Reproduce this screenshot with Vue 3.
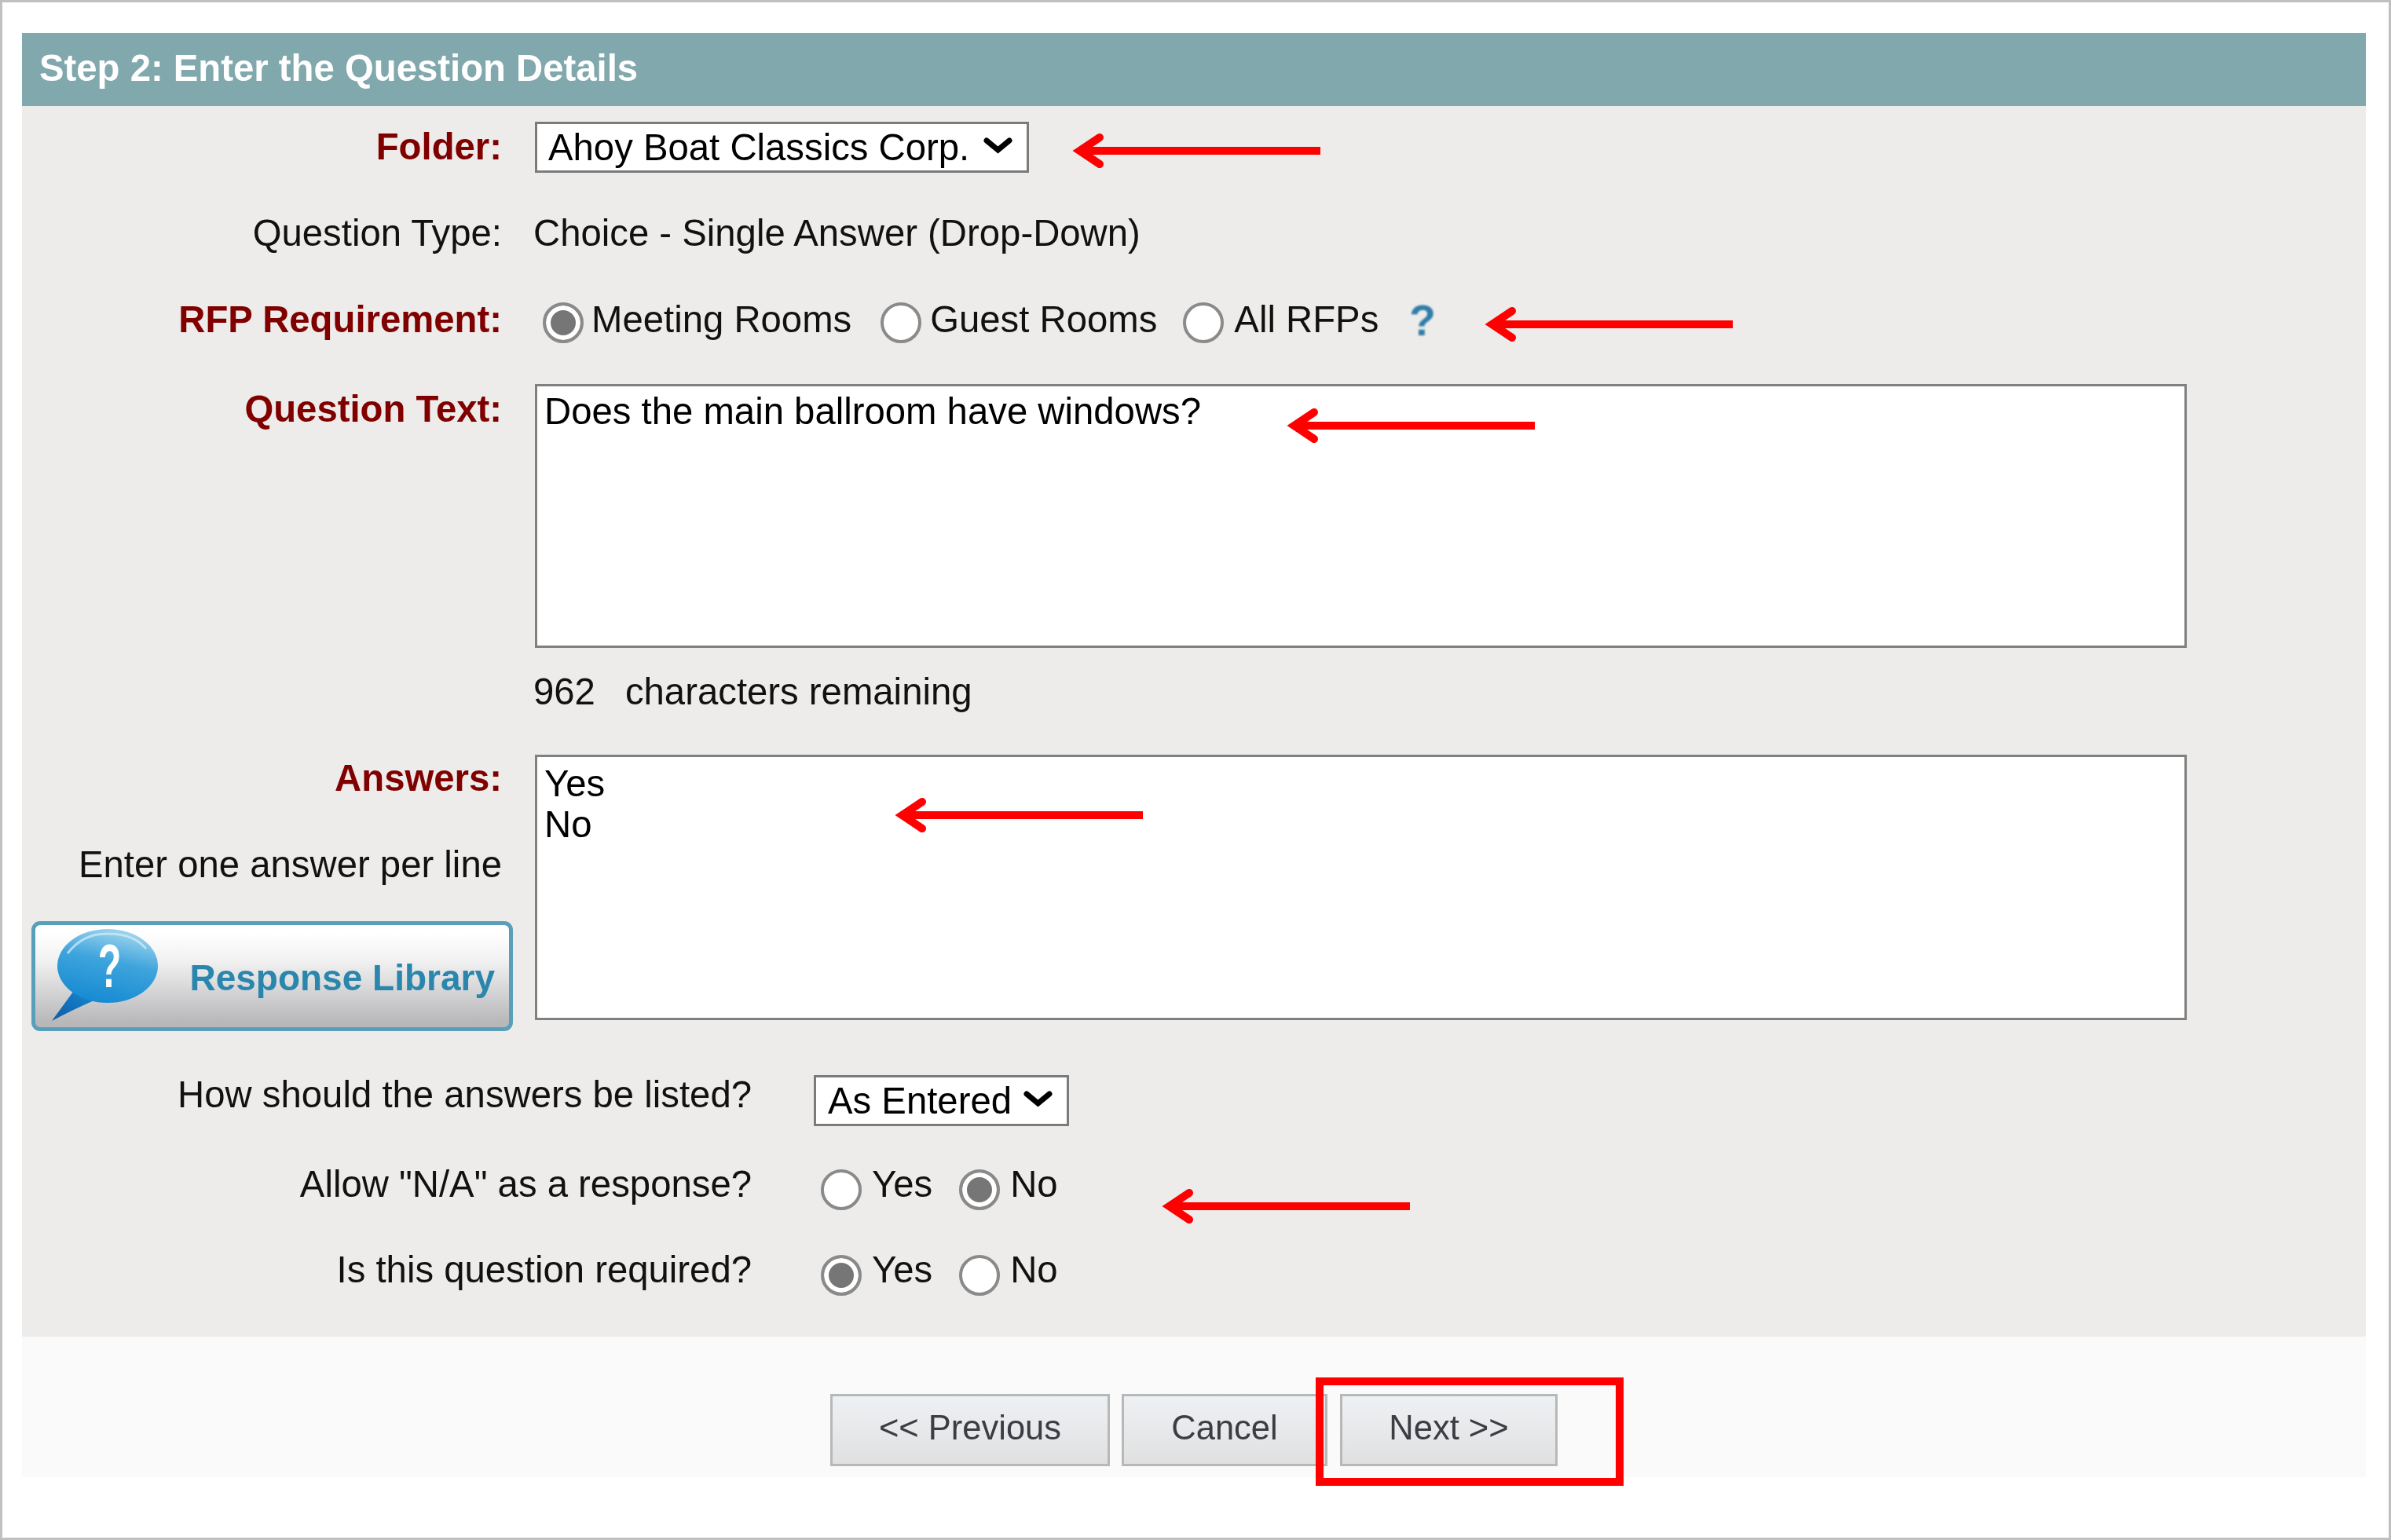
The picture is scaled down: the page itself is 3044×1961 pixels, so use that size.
<script setup>
const arrows = [
  { x: 1365, y: 167 },
  { x: 1890, y: 388 },
  { x: 1638, y: 517 },
  { x: 1139, y: 1013 },
  { x: 1479, y: 1511 },
]
const arrowStyle = (a) => ({ left: a.x + 'px', top: a.y + 'px' })
</script>

<template>
  <div class="frame">
    <div class="panel">
      <h2 class="head">Step 2: Enter the Question Details</h2>
      <div class="body">
        <div class="row r-folder">
          <label class="lab req l-folder">Folder:</label>
          <div class="sel-wrap w-folder">
            <select class="sel">
              <option>Ahoy Boat Classics Corp.</option>
            </select>
            <svg class="chev" viewBox="0 0 37 21"><path d="M4 4 L18.5 16 L33 4" fill="none" stroke="#000" stroke-width="7" stroke-linecap="round" /></svg>
          </div>
        </div>

        <div class="row r-type">
          <span class="lab">Question Type:</span>
          <span class="val">Choice - Single Answer (Drop-Down)</span>
        </div>

        <div class="row r-rfp">
          <span class="lab req">RFP Requirement:</span>
          <div class="opts o-rfp">
            <label class="opt"><input type="radio" name="rfp" checked /><span>Meeting Rooms</span></label>
            <label class="opt"><input type="radio" name="rfp" /><span>Guest Rooms</span></label>
            <label class="opt"><input type="radio" name="rfp" /><span>All RFPs</span></label>
            <span class="help">?</span>
          </div>
        </div>

        <div class="row r-qt">
          <label class="lab req l-qt">Question Text:</label>
          <textarea class="ta ta-q" readonly>Does the main ballroom have windows?</textarea>
        </div>

        <div class="row r-count">
          <span class="count"><span>962</span><span>characters remaining</span></span>
        </div>

        <div class="row r-ans">
          <div class="ans-side">
            <label class="lab req l-ans">Answers:</label>
            <span class="lab l-enter">Enter one answer per line</span>
            <button class="lib" type="button">
              <svg class="bubble" viewBox="0 0 140 124">
                <defs>
                  <linearGradient id="bub" x1="0.7" y1="0" x2="0.4" y2="1">
                    <stop offset="0" stop-color="#a5d8ef" />
                    <stop offset="0.45" stop-color="#3ea4dc" />
                    <stop offset="1" stop-color="#168ad2" />
                  </linearGradient>
                  <linearGradient id="tail" x1="0" y1="1" x2="1" y2="0">
                    <stop offset="0" stop-color="#0e5aa4" />
                    <stop offset="1" stop-color="#168ad2" />
                  </linearGradient>
                </defs>
                <path d="M4 122 L31 85 L60 95 Q30 108 4 122 Z" fill="url(#tail)" />
                <ellipse cx="75" cy="52" rx="64" ry="47" fill="url(#bub)" />
                <path d="M24 36 Q44 10 76 11 Q108 11 124 30" fill="none" stroke="#d6eef8" stroke-width="3" opacity="0.7" />
                <text class="qmark" transform="translate(77.5 79) scale(.62 1)">?</text>
              </svg>
              <span>Response Library</span>
            </button>
          </div>
          <textarea class="ta ta-a" readonly>Yes
No</textarea>
        </div>

        <div class="row r-list">
          <span class="lab2 l-list">How should the answers be listed?</span>
          <div class="sel-wrap w-list">
            <select class="sel s-list">
              <option>As Entered</option>
            </select>
            <svg class="chev" viewBox="0 0 37 21"><path d="M4 4 L18.5 16 L33 4" fill="none" stroke="#000" stroke-width="7" stroke-linecap="round" /></svg>
          </div>
        </div>

        <div class="row r-na">
          <span class="lab2">Allow "N/A" as a response?</span>
          <div class="opts o-low">
            <label class="opt"><input type="radio" name="na" /><span>Yes</span></label>
            <label class="opt"><input type="radio" name="na" checked /><span>No</span></label>
          </div>
        </div>

        <div class="row r-reqd">
          <span class="lab2">Is this question required?</span>
          <div class="opts o-low">
            <label class="opt"><input type="radio" name="rq" checked /><span>Yes</span></label>
            <label class="opt"><input type="radio" name="rq" /><span>No</span></label>
          </div>
        </div>
      </div>

      <div class="foot">
        <button class="btn b-prev" type="button">&lt;&lt; Previous</button>
        <button class="btn b-cancel" type="button">Cancel</button>
        <button class="btn b-next" type="button">Next &gt;&gt;</button>
      </div>
    </div>

    <svg v-for="(a, i) in arrows" :key="i" class="arrow" :style="arrowStyle(a)" viewBox="0 0 316 50">
      <path d="M10 25 H316" stroke="#f00" stroke-width="10" fill="none" />
      <path d="M35 8 L9.5 25 L35 42" stroke="#f00" stroke-width="10" fill="none" stroke-linecap="round" stroke-linejoin="miter" />
    </svg>
    <div class="callout"></div>
  </div>
</template>

<style scoped>
.frame {
  position: relative;
  box-sizing: border-box;
  width: 3044px;
  height: 1961px;
  border: 3px solid #c0c0c0;
  background: #fff;
  padding: 39px 29px 0 25px;
  font-family: "Liberation Sans", Arial, sans-serif;
  font-size: 47.3px;
  line-height: 54px;
  color: #111;
}
.panel { display: flex; flex-direction: column; filter: blur(0.6px); }
.head {
  margin: 0;
  height: 93px;
  padding-left: 22px;
  background: #80a8ad;
  color: #fff;
  font-size: 47.3px;
  font-weight: bold;
  line-height: 90px;
}
.body {
  background: #edecea;
  padding: 20px 0 52px;
  display: flex;
  flex-direction: column;
}
.row { display: flex; align-items: flex-start; }
.r-type { margin-top: 50px; }
.r-rfp { margin-top: 56px; }
.r-qt { margin-top: 52px; }
.r-count { margin-top: 29px; padding-left: 651px; }
.r-ans { margin-top: 53px; }
.r-list { margin-top: 56px; }
.r-na { margin-top: 47px; }
.r-reqd { margin-top: 49px; }

.lab {
  width: 611px;
  margin-right: 42px;
  text-align: right;
  flex: none;
}
.req { color: #800000; font-weight: bold; }
.l-folder { margin-top: 5px; }
.l-qt { margin-top: 5px; }
.lab2 {
  width: 929px;
  margin-right: 79px;
  text-align: right;
  flex: none;
}
.l-list { margin-top: -2px; }

.sel-wrap { position: relative; flex: none; }
.w-folder { width: 629px; height: 65px; }
.w-list { width: 325px; height: 65px; }
.sel {
  appearance: none;
  box-sizing: border-box;
  width: 100%;
  height: 100%;
  margin: 0;
  padding: 0 0 0 14px;
  border: 3px solid #7b7b7b;
  border-radius: 0;
  background: #fff;
  color: #000;
  font: inherit;
  line-height: 54px;
}
.s-list { padding-left: 15px; }
.chev {
  position: absolute;
  right: 21px;
  top: 20px;
  width: 37px;
  height: 21px;
  pointer-events: none;
}

.opts { display: flex; align-items: flex-start; }
.opt { display: flex; align-items: flex-start; }
.opt input {
  appearance: none;
  box-sizing: border-box;
  width: 52px;
  height: 52px;
  margin: 5px 10px 0 0;
  border: 4px solid #8a8a8a;
  border-radius: 50%;
  background: #fff;
  flex: none;
}
.opt input:checked {
  background: #767676;
  box-shadow: inset 0 0 0 6px #fff;
}
.o-rfp { padding-left: 10px; }
.o-rfp .opt { margin-right: 37px; }
.o-rfp .opt:nth-child(2) { margin-right: 33px; }
.o-rfp .opt:nth-child(2) input { margin-right: 11px; }
.o-rfp .opt:nth-child(3) { margin-right: 39px; }
.o-rfp .opt:nth-child(3) input { margin-right: 13px; }
.help {
  width: 32px;
  font-weight: bold;
  color: #2f7da8;
  text-align: center;
  line-height: 54px;
  font-size: 55px;
  margin-top: 1px;
  filter: blur(0.8px);
}
.o-low { padding-left: 9px; }
.o-low .opt input { margin-top: 8px; margin-right: 13px; }
.o-low .opt { margin-right: 34px; }
.val { color: #111; margin-left: -2px; }

.ta {
  box-sizing: border-box;
  display: block;
  width: 2103px;
  margin: 0;
  padding: 8px 9px;
  border: 3px solid #808080;
  border-radius: 0;
  background: #fff;
  color: #000;
  font: inherit;
  line-height: 52px;
  resize: none;
  outline: none;
  overflow: hidden;
}
.ta-q { height: 336px; padding-top: 6px; }
.ta-a { height: 338px; }
.count { display: flex; gap: 38px; }
.ans-side {
  display: flex;
  flex-direction: column;
  align-items: flex-end;
  width: 625px;
  margin-right: 28px;
  flex: none;
}
.ans-side .lab { margin-right: 14px; width: auto; }
.l-ans { margin-top: 3px; }
.l-enter { margin-top: 56px; }
.lib {
  box-sizing: border-box;
  position: relative;
  display: flex;
  align-items: center;
  justify-content: flex-end;
  width: 613px;
  height: 140px;
  margin: 45px 0 0;
  padding: 0 18px 0 0;
  border: 5px solid #5a9fba;
  border-radius: 11px;
  background: linear-gradient(#fff 8%, #f1f1f2 35%, #b8b8ba 95%);
  color: #2a86ad;
  font: bold 46px/54px "Liberation Sans", Arial, sans-serif;
}
.lib span { position: relative; top: 2px; filter: blur(0.6px); }
.bubble { position: absolute; left: 17px; top: 0; width: 140px; height: 124px; }
.qmark { fill: #fff; font: bold 78px "Liberation Sans", Arial, sans-serif; text-anchor: middle; }

.foot {
  background: #fafafa;
  height: 179px;
  box-sizing: border-box;
  padding-top: 73px;
  display: flex;
  justify-content: center;
  align-items: flex-start;
}
.btn {
  box-sizing: border-box;
  height: 92px;
  margin: 0;
  padding: 0 0 6px;
  border: 3px solid #b7b8b8;
  border-radius: 0;
  background: linear-gradient(#eef1f4, #e0e0e0);
  color: #3c3c44;
  font: 43.5px/54px "Liberation Sans", Arial, sans-serif;
}
.b-prev { width: 356px; margin-right: 15px; }
.b-cancel { width: 262px; margin-right: 16px; }
.b-next { width: 277px; }

.arrow { position: absolute; width: 316px; height: 50px; margin: -3px 0 0 -3px; }
.callout {
  position: absolute;
  left: 1672px;
  top: 1751px;
  width: 392px;
  height: 138px;
  box-sizing: border-box;
  border: 10px solid #f00;
}
</style>

<style>
html, body { margin: 0; background: #fff; }
</style>
